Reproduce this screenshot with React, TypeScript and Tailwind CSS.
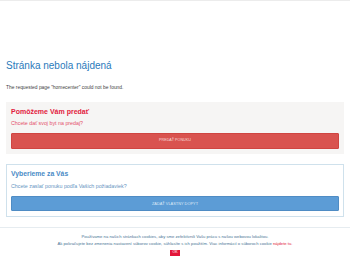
export default function App() {
  return (
    <div className="w-[350px] h-[262px] overflow-hidden bg-white font-['Liberation_Sans',Arial,sans-serif]">
      <div className="h-px bg-[#ececec]" />
      <div className="px-[6px] pt-[59px]">
        <h1 className="text-[10px] leading-[12px] text-[#2a7abb]">Stránka nebola nájdená</h1>
        <p className="mt-[13px] text-[4.9px] leading-[6px] text-[#444]">
          The requested page "homecenter" could not be found.
        </p>

        <div className="mt-[11px] bg-[#f6f5f4] px-[5px] pt-[5px] pb-[5px]">
          <h3 className="text-[7px] font-bold leading-[10px] text-[#e2203e]">Pomôžeme Vám predať</h3>
          <p className="mt-[3px] text-[5.3px] leading-[6px] text-[#e4506a]">Chcete dať svoj byt na predaj?</p>
          <div className="mt-[7px] flex h-[16px] items-center justify-center rounded-[1px] border border-[#cf4541] bg-[#d9534f] text-[3.7px] text-[#f7dcdb]">
            PREDAŤ PONUKU
          </div>
        </div>

        <div className="mt-[10px] border border-[#cfe1ec] bg-white px-[4px] pt-[4px] pb-[5px]">
          <h3 className="text-[6.8px] font-bold leading-[9px] text-[#4a8bc6]">Vyberieme za Vás</h3>
          <p className="mt-[5px] text-[5.3px] leading-[6px] text-[#6795c2]">
            Chcete zaslať ponuku podľa Vašich požiadaviek?
          </p>
          <div className="mt-[7px] flex h-[15px] items-center justify-center rounded-[1px] border border-[#4f8cc4] bg-[#5c9cd6] text-[3.9px] text-[#dce9f6]">
            ZADAŤ VLASTNÝ DOPYT
          </div>
        </div>
      </div>

      <div className="mt-[10px] border-t border-[#e6ecf0] pt-[5px] text-center text-[4.2px] leading-[7px] text-[#4a7595]">
        <p>Používame na našich stránkach cookies, aby sme zefektívnili Vašu prácu s našou webovou lokalitou.</p>
        <p>
          Ak pokračujete bez zmenenia nastavení súborov cookie, súhlasíte s ich použitím. Viac informácií o súboroch cookie{" "}
          <span className="text-[#e2203e]">nájdete tu.</span>
        </p>
        <div className="mt-[3px] flex justify-center">
          <div className="flex h-[6px] w-[10px] items-center justify-center bg-[#e3163a] text-[3.5px] leading-none text-white">
            OK
          </div>
        </div>
      </div>
    </div>
  );
}
